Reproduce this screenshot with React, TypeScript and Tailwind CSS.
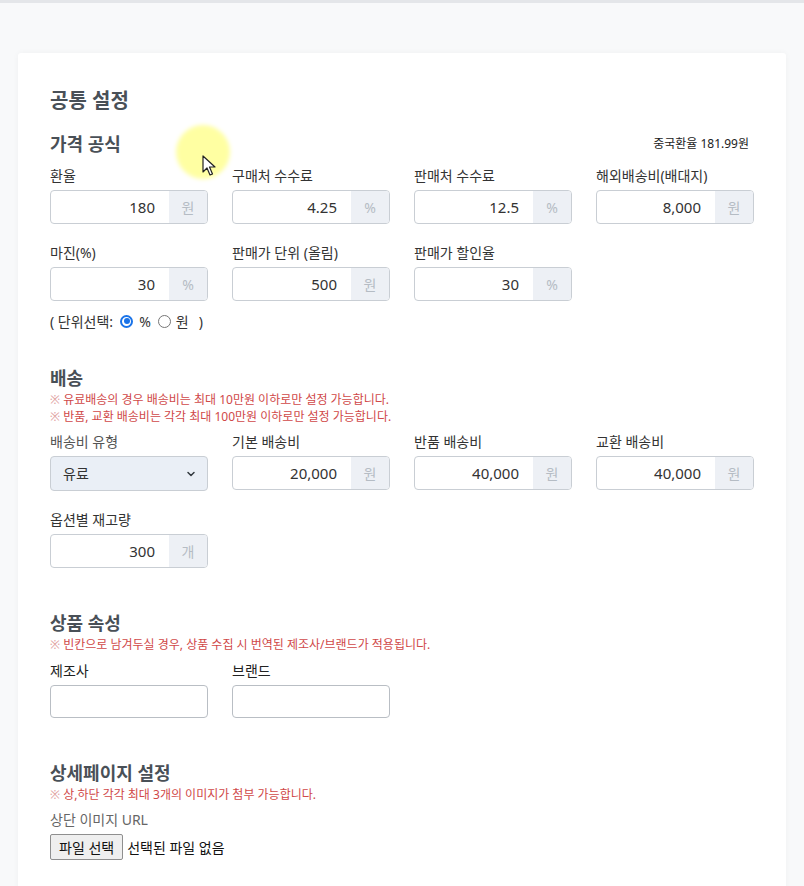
import React from "react";

const font = { fontFamily: '"Noto Sans", "Noto Sans CJK KR", sans-serif' };

function Field({ label, value, unit }: { label: string; value: string; unit: string }) {
  return (
    <div className="flex flex-col">
      <div className="h-[20px] text-[14px] leading-[20px] text-[#333]">{label}</div>
      <div className="mt-[4px] flex h-[34px] w-[158px] overflow-hidden rounded-[4px] border border-[#c9ced4] bg-white">
        <div className="flex flex-1 items-center justify-end pr-[14px] text-[15px] text-[#333]">{value}</div>
        <div className="flex w-[38px] items-center justify-center bg-[#edf0f5] text-[14px] text-[#b5bcc4]">{unit}</div>
      </div>
    </div>
  );
}

function EmptyField({ label }: { label: string }) {
  return (
    <div className="flex flex-col">
      <div className="h-[20px] text-[14px] leading-[20px] text-[#222]">{label}</div>
      <div className="mt-[4px] h-[33px] w-[158px] rounded-[4px] border border-[#b9bec4] bg-white" />
    </div>
  );
}

function Note({ children }: { children: React.ReactNode }) {
  return (
    <div>
      <span className="text-[#e0a0a0]">※</span> {children}
    </div>
  );
}

export default function App() {
  return (
    <div className="relative min-h-[886px] bg-[#f8f9fa]" style={font}>
      <div className="h-[3px] bg-[#e4e6e9]" />
      <div className="px-[18px] pt-[50px]">
        <div className="min-h-[840px] rounded-t-[3px] bg-white pl-[32px] pt-[34px] shadow-[0_0_6px_rgba(0,0,0,0.04)]">
          <div className="h-[28px] text-[20px] font-bold leading-[28px] text-[#495057]">공통 설정</div>

          <div className="mt-[16px] flex w-[704px] items-center justify-between">
            <div className="h-[26px] text-[18px] font-semibold leading-[26px] text-[#495057]">가격 공식</div>
            <div className="pr-[5px] text-[12px] text-[#222]">중국환율 181.99원</div>
          </div>

          <div className="mt-[9px] grid w-[704px] grid-cols-4 gap-x-[24px] gap-y-[19px]">
            <Field label="환율" value="180" unit="원" />
            <Field label="구매처 수수료" value="4.25" unit="%" />
            <Field label="판매처 수수료" value="12.5" unit="%" />
            <Field label="해외배송비(배대지)" value="8,000" unit="원" />
            <Field label="마진(%)" value="30" unit="%" />
            <Field label="판매가 단위 (올림)" value="500" unit="원" />
            <Field label="판매가 할인율" value="30" unit="%" />
          </div>

          <div className="mt-[10px] flex h-[20px] items-center text-[14px] text-[#333]">
            <span>( 단위선택:</span>
            <span className="ml-[7px] inline-flex h-[13px] w-[13px] items-center justify-center rounded-full border-[2px] border-[#1a73e8] bg-white">
              <span className="h-[6px] w-[6px] rounded-full bg-[#1a73e8]" />
            </span>
            <span className="ml-[6px]">%</span>
            <span className="ml-[7px] inline-block h-[13px] w-[13px] rounded-full border border-[#767676] bg-white" />
            <span className="ml-[5px]">원</span>
            <span className="ml-[10px]">)</span>
          </div>

          <div className="mt-[34px] h-[26px] text-[18px] font-semibold leading-[26px] text-[#495057]">배송</div>
          <div className="text-[12px] leading-[17px] text-[#d04848]">
            <Note>유료배송의 경우 배송비는 최대 10만원 이하로만 설정 가능합니다.</Note>
            <Note>반품, 교환 배송비는 각각 최대 100만원 이하로만 설정 가능합니다.</Note>
          </div>

          <div className="mt-[7px] grid w-[704px] grid-cols-4 gap-x-[24px] gap-y-[19px]">
            <div className="flex flex-col">
              <div className="h-[20px] text-[14px] leading-[20px] text-[#555]">배송비 유형</div>
              <div className="mt-[4px] flex h-[35px] w-[158px] items-center justify-between rounded-[4px] border border-[#c9ced4] bg-[#eaeff6] pl-[12px] pr-[10px] text-[14px] text-[#333]">
                <span>유료</span>
                <svg width="12" height="12" viewBox="0 0 16 16" fill="none" stroke="#343a40" strokeWidth="2" strokeLinecap="round" strokeLinejoin="round">
                  <path d="M4 6l4 4 4-4" />
                </svg>
              </div>
            </div>
            <Field label="기본 배송비" value="20,000" unit="원" />
            <Field label="반품 배송비" value="40,000" unit="원" />
            <Field label="교환 배송비" value="40,000" unit="원" />
            <Field label="옵션별 재고량" value="300" unit="개" />
          </div>

          <div className="mt-[42px] h-[26px] text-[18px] font-semibold leading-[26px] text-[#495057]">상품 속성</div>
          <div className="text-[12px] leading-[17px] text-[#d04848]">
            <Note>빈칸으로 남겨두실 경우, 상품 수집 시 번역된 제조사/브랜드가 적용됩니다.</Note>
          </div>
          <div className="mt-[8px] flex gap-[24px]">
            <EmptyField label="제조사" />
            <EmptyField label="브랜드" />
          </div>

          <div className="mt-[42px] h-[26px] text-[18px] font-semibold leading-[26px] text-[#495057]">상세페이지 설정</div>
          <div className="text-[12px] leading-[17px] text-[#d04848]">
            <Note>상,하단 각각 최대 3개의 이미지가 첨부 가능합니다.</Note>
          </div>
          <div className="mt-[7px] h-[20px] text-[14px] leading-[20px] text-[#666]">상단 이미지 URL</div>
          <div className="mt-[4px] flex items-center text-[14px] text-[#111]">
            <div className="flex h-[26px] items-center rounded-[2px] border border-[#8f8f8f] bg-[#efefef] px-[8px]">파일 선택</div>
            <span className="ml-[4px]">선택된 파일 없음</span>
          </div>
        </div>
      </div>

      <div className="pointer-events-none absolute left-[176px] top-[125px] h-[54px] w-[54px] rounded-full bg-[#ffff66] opacity-60 blur-[2px]" />
      <svg className="pointer-events-none absolute left-[202px] top-[155px]" width="14" height="22" viewBox="0 0 14 22">
        <path d="M1 1 L1 17 L5 13 L8 20 L10.5 19 L7.5 12 L13 12 Z" fill="#fff" stroke="#222" strokeWidth="1.2" strokeLinejoin="round" />
      </svg>
    </div>
  );
}
